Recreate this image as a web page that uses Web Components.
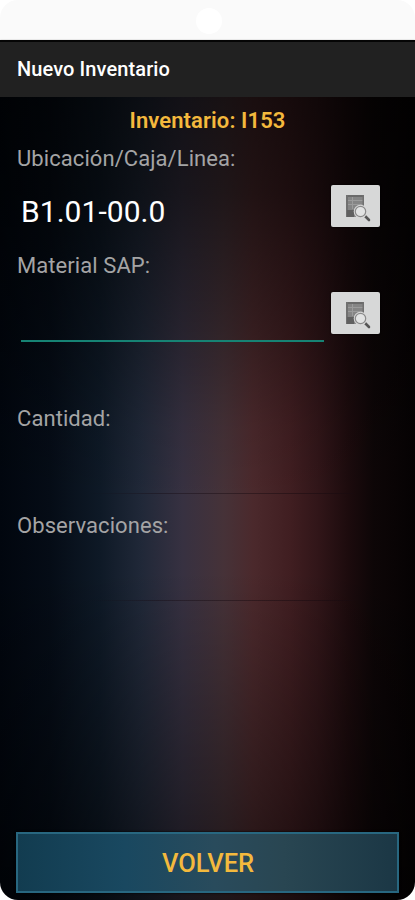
<!DOCTYPE html>
<html lang="es">
<head>
<meta charset="utf-8">
<title>Nuevo Inventario</title>
<style>
html,body{margin:0;background:#fff}
body{width:415px;height:900px;overflow:hidden;font-family:Roboto,"Liberation Sans",sans-serif}
</style>
</head>
<body>
<inventory-screen></inventory-screen>
<script>
const define=(name,html)=>customElements.define(name,class extends HTMLElement{
  constructor(){
    super();
    const t=document.createElement('template');
    t.innerHTML=html;
    this.attachShadow({mode:'open'}).append(t.content.cloneNode(true));
  }
});

define('status-strip',`<style>
:host{display:flex;box-sizing:border-box;height:40px;justify-content:center;padding-top:8px;background:#fafafa;border-radius:18px 18px 0 0}
i{width:26px;height:26px;margin-left:2px;border-radius:50%;background:#fff}
</style><i></i>`);

define('title-bar',`<style>
:host{display:flex;box-sizing:border-box;height:57px;align-items:center;padding:0 17px 2px;background:#212121;border-top:2px solid #050505;color:#fff;font-size:20px;font-weight:500;line-height:24px;box-shadow:0 1px 2px #000}
span{white-space:nowrap;letter-spacing:.1px}
</style><span><slot></slot></span>`);

define('lookup-button',`<style>
:host{display:flex;width:49px;height:42px;align-items:center;justify-content:center;background:#d7d8d8;border-radius:2px;box-shadow:0 0 2px #000}
svg{display:block}
</style><svg width="49" height="42" viewBox="0 0 49 42">
<rect x="15" y="10" width="18" height="22" fill="#858585"/>
<rect x="15" y="10" width="18" height="2" fill="#6a6a6a"/>
<rect x="15" y="10" width="2" height="22" fill="#707070"/>
<path d="M17 15.500H32M17 19.500H32M21.500 12V24" stroke="#9b9b9b" stroke-width="1"/>
<rect x="31.500" y="10" width="1.500" height="14" fill="#707070"/>
<rect x="16" y="25" width="7" height="7" fill="#606060"/>
<path d="M34 31L38 35" stroke="#555" stroke-width="2.600" stroke-linecap="round"/>
<circle cx="29.500" cy="26.500" r="6.800" fill="#d8d8d8"/>
<circle cx="29.500" cy="26.500" r="5.200" fill="#e2e3e3" stroke="#8b8b8b" stroke-width="1.200"/>
</svg>`);

define('form-field',`<style>
:host{display:block;box-sizing:border-box;height:var(--h,107px);padding:1px 17px 0}
label{display:block;height:28px;line-height:28px;font-size:22px;color:#a4a4a5;white-space:nowrap;letter-spacing:.07px}
.row{display:flex;height:62px;gap:7px;margin-left:4px}
.value{box-sizing:border-box;width:303px;height:62px;padding-top:21px;font-size:30px;line-height:36px;color:#fff;border-bottom:2px solid var(--line,transparent);white-space:nowrap;letter-spacing:.05px}
.action{padding-top:12px}
</style>
<label><slot name="label"></slot></label>
<div class="row"><div class="value"><slot></slot></div><div class="action"><slot name="action"></slot></div></div>`);

define('faint-line',`<style>
:host{display:block;height:1px;width:332px;margin-top:39px;background:linear-gradient(90deg,transparent 20%,#150a1266 40%,#180a0f88)}
</style>`);

define('action-button',`<style>
:host{display:flex;box-sizing:border-box;height:61px;margin:0 16px 7px;padding-left:1px;align-items:center;justify-content:center;border:2px solid #286780;background:linear-gradient(90deg,#123c50,#194860 28%,#294b5c 52%,#294652 70%,#1b3745);box-shadow:0 0 2px #000;color:#f4b93d;font-size:25.500px;font-weight:500;line-height:30px}
</style><slot></slot>`);

define('inventory-screen',`<style>
:host{display:flex;flex-direction:column;width:415px;height:900px;background:#fff}
main{display:flex;flex:1;flex-direction:column;border-radius:0 0 18px 18px;background:
 linear-gradient(180deg,#000000a8 0,#00000090 12%,#0000004d 29%,#00000014 41%,#0000 50%,#0000 59%,#0002 70%,#0000005c 87%,#00000090),
 linear-gradient(90deg,#01060e 0,#050c16 12%,#0e1926 24%,#202838 34%,#373141 44%,#463238 54%,#4b292c 61%,#401e21 70%,#301518 77%,#1c0b0d 84%,#0d0607 90%,#050203)}
h1{margin:9px 0 8px;text-align:center;font-size:22px;line-height:30px;height:30px;font-weight:600;color:#f4b93d;letter-spacing:.1px}
action-button{margin-top:auto}
</style>
<status-strip></status-strip>
<title-bar>Nuevo Inventario</title-bar>
<main>
<h1>Inventario: I153</h1>
<form-field><span slot="label">Ubicación/Caja/Linea:</span>B1.01-00.0<lookup-button slot="action"></lookup-button></form-field>
<form-field style="--h:153px;--line:#168374"><span slot="label">Material SAP:</span><lookup-button slot="action"></lookup-button></form-field>
<form-field><span slot="label">Cantidad:</span><faint-line></faint-line></form-field>
<form-field><span slot="label">Observaciones:</span><faint-line></faint-line></form-field>
<action-button>VOLVER</action-button>
</main>`);
</script>
</body>
</html>
